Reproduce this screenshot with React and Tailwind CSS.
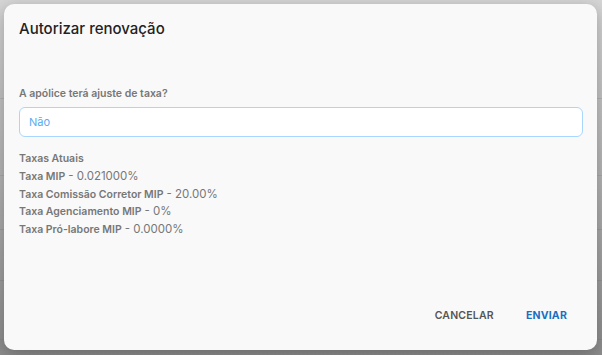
export default function App() {
  return (
    <div className="relative w-[602px] h-[355px] overflow-hidden bg-gradient-to-b from-[#d6d6d6] via-[#b4b4b4] to-[#8c8c8c]" style={{ fontFamily: 'Inter, "Noto Sans", sans-serif' }}>
      <div className="absolute inset-0 flex flex-col pt-[98px]">
        <div className="h-[1px] bg-[#a9a9a9]/60 mt-[0px]" />
        <div className="h-[1px] bg-[#a0a0a0]/60 mt-[76px]" />
        <div className="h-[1px] bg-[#959595]/60 mt-[53px]" />
        <div className="h-[1px] bg-[#8c8c8c]/60 mt-[50px]" />
        <div className="h-[1px] bg-[#858585]/60 mt-[58px]" />
      </div>
      <div className="absolute left-[4px] top-[4px] w-[593px] h-[346px] bg-[#f9f9f9] rounded-[10px] shadow-[0_4px_16px_rgba(0,0,0,0.25)] flex flex-col px-[15px]">
        <h2 className="mt-[15px] text-[15px] leading-[20px] text-[#222] font-medium">Autorizar renovação</h2>
        <div className="mt-[48px] text-[10.5px] leading-[14px] font-semibold text-[#777]">A apólice terá ajuste de taxa?</div>
        <div className="mt-[6px] h-[30px] w-[564px] rounded-[6px] border border-[#a9d6ff] bg-white flex items-center px-[9px] text-[11px] text-[#5aacf2]">Não</div>
        <div className="mt-[13px] flex flex-col text-[10.5px] text-[#777]">
          <div className="h-[17.75px] leading-[17.75px] font-semibold">Taxas Atuais</div>
          <div className="h-[17.75px] leading-[17.75px]"><span className="font-semibold">Taxa MIP</span> <span className="text-[11.5px] leading-[17.75px]">- 0.021000%</span></div>
          <div className="h-[17.75px] leading-[17.75px]"><span className="font-semibold">Taxa Comissão Corretor MIP</span> <span className="text-[11.5px] leading-[17.75px]">- 20.00%</span></div>
          <div className="h-[17.75px] leading-[17.75px]"><span className="font-semibold">Taxa Agenciamento MIP</span> <span className="text-[11.5px] leading-[17.75px]">- 0%</span></div>
          <div className="h-[17.75px] leading-[17.75px]"><span className="font-semibold">Taxa Pró-labore MIP</span> <span className="text-[11.5px] leading-[17.75px]">- 0.0000%</span></div>
        </div>
        <div className="mt-auto mb-[26px] flex justify-end items-center gap-[32px] pr-[15px] text-[10.5px] font-semibold tracking-[0.2px]">
          <span className="text-[#555]">CANCELAR</span>
          <span className="text-[#1a6fc2] font-bold">ENVIAR</span>
        </div>
      </div>
    </div>
  );
}
